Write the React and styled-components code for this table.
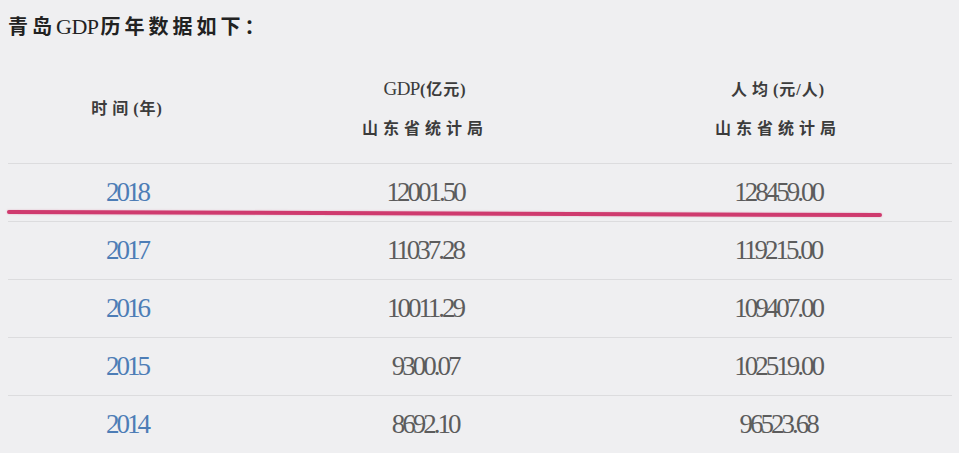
import styled, { createGlobalStyle } from 'styled-components'

const GlobalStyle = createGlobalStyle`
  html, body {
    margin: 0;
    padding: 0;
    background: #efeff1;
  }
  body {
    font-family: 'Liberation Serif', 'Noto Sans CJK SC', serif;
  }
`

const Page = styled.div`
  width: 959px;
  height: 453px;
  padding: 0 7px 0 8px;
  box-sizing: border-box;
  overflow: hidden;
`

const Title = styled.h1`
  margin: 0;
  height: 54px;
  line-height: 54px;
  font-size: 20px;
  font-weight: 700;
  letter-spacing: 4px;
  color: #222;
`

const TitleLatin = styled.span`
  font-size: 22px;
  font-weight: 400;
  letter-spacing: -0.5px;
  margin-right: 2px;
`

const Grid = styled.div`
  display: grid;
  grid-template-columns: 238px 358px 1fr;
  align-items: center;
  box-sizing: border-box;
  height: ${(p) => p.$h}px;
  border-top: ${(p) => (p.$line ? '1px solid #dcdcde' : 'none')};
`

const HeadCell = styled.div`
  text-align: center;
  font-size: 16px;
  font-weight: 700;
  line-height: 39px;
  letter-spacing: 5px;
  color: #3c3c3c;
`

const Latin = styled.span`
  font-size: 19px;
  font-weight: 400;
  letter-spacing: -0.5px;
`

const Paren = styled.span`
  letter-spacing: 1px;
`

const Cell = styled.div`
  text-align: center;
  font-size: 27px;
  letter-spacing: -3px;
  color: ${(p) => (p.$year ? '#4d7db6' : '#5c5c5c')};
`

const Body = styled.div`
  position: relative;
`

const Marker = styled.div`
  position: absolute;
  top: 47px;
  left: -1px;
  width: 875px;
  height: 4px;
  border-radius: 2px;
  background: #cf3a6e;
  box-shadow: 0 0 2px rgba(207, 58, 110, 0.35);
  transform-origin: left center;
  transform: rotate(0.2deg);
`

const rows = [
  ['2018', '12001.50', '128459.00'],
  ['2017', '11037.28', '119215.00'],
  ['2016', '10011.29', '109407.00'],
  ['2015', '9300.07', '102519.00'],
  ['2014', '8692.10', '96523.68'],
]

const App = () => {
  return (
    <Page>
      <GlobalStyle />
      <Title>
        青岛<TitleLatin>GDP</TitleLatin>历年数据如下：
      </Title>

      <Grid $h={109}>
        <HeadCell>
          时间<Paren>(年)</Paren>
        </HeadCell>
        <HeadCell>
          <Latin>GDP</Latin>
          <Paren>(亿元)</Paren>
          <br />
          山东省统计局
        </HeadCell>
        <HeadCell>
          人均<Paren>(元/人)</Paren>
          <br />
          山东省统计局
        </HeadCell>
      </Grid>

      <Body>
        {rows.map(([year, gdp, avg]) => (
          <Grid key={year} $h={58} $line>
            <Cell $year>{year}</Cell>
            <Cell>{gdp}</Cell>
            <Cell>{avg}</Cell>
          </Grid>
        ))}
        {/* 2018 高亮划线 */}
        <Marker />
      </Body>
    </Page>
  )
}

export default App
